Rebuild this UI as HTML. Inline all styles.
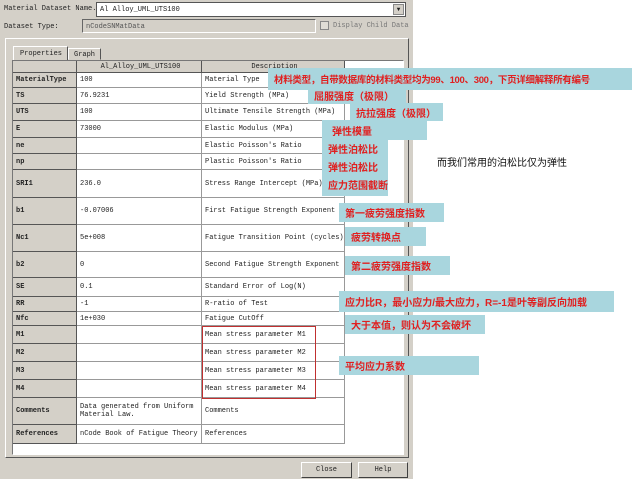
<!DOCTYPE html>
<html><head><meta charset="utf-8"><style>
*{margin:0;padding:0;box-sizing:border-box}
body{width:640px;height:479px;background:#fff;position:relative;overflow:hidden;font-family:"Liberation Mono",monospace;font-size:7px;color:#222}
.a{position:absolute}
#dlg{left:0;top:0;width:413px;height:479px;background:#d4d0c8}
.cell{position:absolute;border-right:1px solid #999;border-bottom:1px solid #999;background:#fff;padding-left:3px;display:flex;align-items:center;white-space:nowrap;overflow:hidden;line-height:8px}
.rh{background:#d4d0c8;border-right:1px solid #555;border-bottom:1px solid #555;font-weight:bold}
.n{font-family:"Liberation Sans","Noto Sans CJK SC",sans-serif;color:#e02020;font-weight:bold;font-size:10px;background:#a9d6de;position:absolute;padding-left:6px;display:flex;align-items:center;white-space:nowrap;overflow:hidden}
.btn{position:absolute;background:#d4d0c8;border:1px solid;border-color:#fff #404040 #404040 #fff;display:flex;align-items:center;justify-content:center}
</style></head><body>
<div id="dlg" class="a"></div>
<div class="a" style="left:4px;top:5px">Material Dataset Name.</div>
<div class="a" style="left:96px;top:2px;width:310px;height:15px;background:#fff;border:1px solid #555;padding:3px 3px">Al Alloy_UML_UTS100</div>
<div class="a" style="left:393px;top:4px;width:11px;height:11px;background:#d4d0c8;border:1px solid #888;font-size:6px;text-align:center;line-height:10px">▼</div>
<div class="a" style="left:4px;top:23px">Dataset Type:</div>
<div class="a" style="left:82px;top:19px;width:234px;height:14px;background:#d4d0c8;border:1px solid;border-color:#666 #fff #fff #666;padding:3px 3px;color:#555">nCodeSNMatData</div>
<div class="a" style="left:320px;top:21px;width:9px;height:9px;border:1px solid #888;background:#e0ddd6"></div>
<div class="a" style="left:333px;top:22px;color:#777">Display Child Data</div>
<div class="a" style="left:5px;top:38px;width:404px;height:420px;border:1px solid;border-color:#fff #555 #555 #fff"></div>
<div class="a" style="left:13px;top:46px;width:55px;height:15px;border:1px solid;border-color:#fff #555 transparent #fff;background:#d4d0c8;padding:3px 6px">Properties</div>
<div class="a" style="left:68px;top:48px;width:33px;height:12px;border:1px solid;border-color:#fff #555 transparent #fff;padding:2px 5px">Graph</div>
<div class="a" style="left:12px;top:60px;width:392px;height:395px;background:#fff;border:1px solid;border-color:#777 #fff #fff #777"></div>
<div class="cell rh" style="left:13px;top:61px;width:64px;height:12px"></div>
<div class="cell rh" style="left:77px;top:61px;width:125px;height:12px;justify-content:center;font-weight:normal">Al_Alloy_UML_UTS100</div>
<div class="cell rh" style="left:202px;top:61px;width:143px;height:12px;justify-content:center;font-weight:normal">Description</div>
<div id="rows"></div>
<div class="a" style="left:202px;top:326px;width:114px;height:73px;border:1px solid #c03030"></div>
<div class="btn" style="left:301px;top:462px;width:51px;height:16px">Close</div>
<div class="btn" style="left:358px;top:462px;width:50px;height:16px">Help</div>

<div class="n" style="left:268px;top:68px;width:364px;height:22px;font-size:9.5px;letter-spacing:-0.3px">材料类型，自带数据库的材料类型均为99、100、300，下页详细解释所有编号</div>
<div class="n" style="left:308px;top:87px;width:98px;height:17px">屈服强度（极限）</div>
<div class="n" style="left:350px;top:103px;width:93px;height:18px">抗拉强度（极限）</div>
<div class="n" style="left:322px;top:120px;width:105px;height:20px;padding-left:10px">弹性模量</div>
<div class="n" style="left:322px;top:140px;width:66px;height:56px;display:block;padding-top:2px;line-height:18px">弹性泊松比<br>弹性泊松比<br>应力范围截断</div>
<div class="a" style="left:437px;top:154px;font-family:'Liberation Sans','Noto Sans CJK SC',sans-serif;font-size:10px;color:#111">而我们常用的泊松比仅为弹性</div>
<div class="n" style="left:339px;top:203px;width:105px;height:19px">第一疲劳强度指数</div>
<div class="n" style="left:345px;top:227px;width:81px;height:19px">疲劳转换点</div>
<div class="n" style="left:345px;top:256px;width:105px;height:19px">第二疲劳强度指数</div>
<div class="n" style="left:339px;top:291px;width:275px;height:21px">应力比R，最小应力/最大应力，R=-1是叶等副反向加载</div>
<div class="n" style="left:345px;top:315px;width:140px;height:19px">大于本值，则认为不会破坏</div>
<div class="n" style="left:339px;top:356px;width:140px;height:19px">平均应力系数</div>
<script>
var r=[["MaterialType","100","Material Type",73,88],["TS","76.9231","Yield Strength (MPa)",88,104],["UTS","100","Ultimate Tensile Strength (MPa)",104,121],["E","73000","Elastic Modulus (MPa)",121,138],["ne","","Elastic Poisson's Ratio",138,154],["np","","Plastic Poisson's Ratio",154,170],["SRI1","236.0","Stress Range Intercept (MPa)",170,198],["b1","-0.07006","First Fatigue Strength Exponent",198,225],["Nc1","5e+008","Fatigue Transition Point (cycles)",225,252],["b2","0","Second Fatigue Strength Exponent",252,278],["SE","0.1","Standard Error of Log(N)",278,297],["RR","-1","R-ratio of Test",297,312],["Nfc","1e+030","Fatigue CutOff",312,326],["M1","","Mean stress parameter M1",326,344],["M2","","Mean stress parameter M2",344,362],["M3","","Mean stress parameter M3",362,380],["M4","","Mean stress parameter M4",380,398],["Comments","Data generated from Uniform<br>Material Law.","Comments",398,425],["References","nCode Book of Fatigue Theory","References",425,444]];
var h="";r.forEach(function(x){var t=x[3],H=x[4]-x[3];
h+='<div class="cell rh" style="left:13px;top:'+t+'px;width:64px;height:'+H+'px">'+x[0]+'</div>';
h+='<div class="cell" style="left:77px;top:'+t+'px;width:125px;height:'+H+'px">'+x[1]+'</div>';
h+='<div class="cell" style="left:202px;top:'+t+'px;width:143px;height:'+H+'px">'+x[2]+'</div>';});
document.getElementById("rows").innerHTML=h;
</script>
</body></html>
